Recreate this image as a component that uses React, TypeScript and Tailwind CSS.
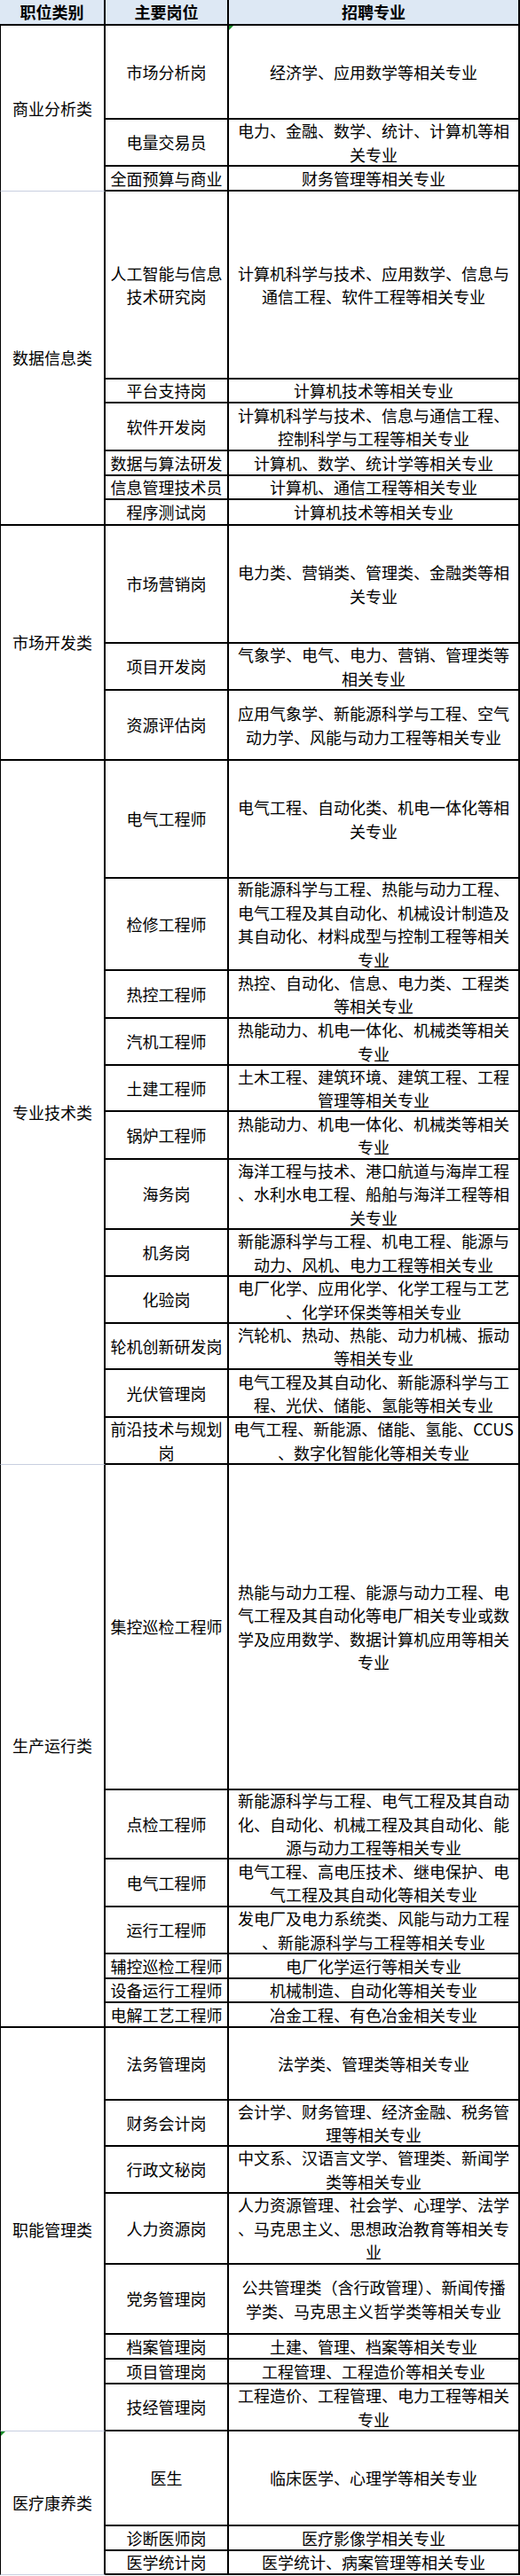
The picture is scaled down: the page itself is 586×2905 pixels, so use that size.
import React from "react";

type Row = { h: string; pos: string[]; maj: string[]; tri?: boolean };
type Group = { cat: string; gray: boolean; tri?: boolean; rows: Row[] };

const groups: Group[] = [
  {
    cat: "商业分析类",
    gray: true,
    rows: [
      { h: "h-[106px]", pos: ["市场分析岗"], maj: ["经济学、应用数学等相关专业"], tri: true },
      { h: "h-[53px]", pos: ["电量交易员"], maj: ["电力、金融、数学、统计、计算机等相", "关专业"] },
      { h: "h-[28px]", pos: ["全面预算与商业"], maj: ["财务管理等相关专业"] },
    ],
  },
  {
    cat: "数据信息类",
    gray: false,
    rows: [
      { h: "h-[212px]", pos: ["人工智能与信息", "技术研究岗"], maj: ["计算机科学与技术、应用数学、信息与", "通信工程、软件工程等相关专业"] },
      { h: "h-[27px]", pos: ["平台支持岗"], maj: ["计算机技术等相关专业"] },
      { h: "h-[54px]", pos: ["软件开发岗"], maj: ["计算机科学与技术、信息与通信工程、", "控制科学与工程等相关专业"] },
      { h: "h-[28px]", pos: ["数据与算法研发"], maj: ["计算机、数学、统计学等相关专业"] },
      { h: "h-[27px]", pos: ["信息管理技术员"], maj: ["计算机、通信工程等相关专业"] },
      { h: "h-[29px]", pos: ["程序测试岗"], maj: ["计算机技术等相关专业"] },
    ],
  },
  {
    cat: "市场开发类",
    gray: false,
    rows: [
      { h: "h-[133px]", pos: ["市场营销岗"], maj: ["电力类、营销类、管理类、金融类等相", "关专业"] },
      { h: "h-[53px]", pos: ["项目开发岗"], maj: ["气象学、电气、电力、营销、管理类等", "相关专业"] },
      { h: "h-[79px]", pos: ["资源评估岗"], maj: ["应用气象学、新能源科学与工程、空气", "动力学、风能与动力工程等相关专业"] },
    ],
  },
  {
    cat: "专业技术类",
    gray: true,
    rows: [
      { h: "h-[133px]", pos: ["电气工程师"], maj: ["电气工程、自动化类、机电一体化等相", "关专业"] },
      {
        h: "h-[104px]",
        pos: ["检修工程师"],
        maj: ["新能源科学与工程、热能与动力工程、", "电气工程及其自动化、机械设计制造及", "其自动化、材料成型与控制工程等相关", "专业"],
      },
      { h: "h-[54px]", pos: ["热控工程师"], maj: ["热控、自动化、信息、电力类、工程类", "等相关专业"] },
      { h: "h-[53px]", pos: ["汽机工程师"], maj: ["热能动力、机电一体化、机械类等相关", "专业"] },
      { h: "h-[52px]", pos: ["土建工程师"], maj: ["土木工程、建筑环境、建筑工程、工程", "管理等相关专业"] },
      { h: "h-[54px]", pos: ["锅炉工程师"], maj: ["热能动力、机电一体化、机械类等相关", "专业"] },
      { h: "h-[79px]", pos: ["海务岗"], maj: ["海洋工程与技术、港口航道与海岸工程", "、水利水电工程、船舶与海洋工程等相", "关专业"] },
      { h: "h-[53px]", pos: ["机务岗"], maj: ["新能源科学与工程、机电工程、能源与", "动力、风机、电力工程等相关专业"] },
      { h: "h-[53px]", pos: ["化验岗"], maj: ["电厂化学、应用化学、化学工程与工艺", "、化学环保类等相关专业"] },
      { h: "h-[52px]", pos: ["轮机创新研发岗"], maj: ["汽轮机、热动、热能、动力机械、振动", "等相关专业"] },
      { h: "h-[54px]", pos: ["光伏管理岗"], maj: ["电气工程及其自动化、新能源科学与工", "程、光伏、储能、氢能等相关专业"] },
      { h: "h-[53px]", pos: ["前沿技术与规划", "岗"], maj: ["电气工程、新能源、储能、氢能、CCUS", "、数字化智能化等相关专业"] },
    ],
  },
  {
    cat: "生产运行类",
    gray: false,
    rows: [
      {
        h: "h-[367px]",
        pos: ["集控巡检工程师"],
        maj: ["热能与动力工程、能源与动力工程、电", "气工程及其自动化等电厂相关专业或数", "学及应用数学、数据计算机应用等相关", "专业"],
      },
      { h: "h-[78px]", pos: ["点检工程师"], maj: ["新能源科学与工程、电气工程及其自动", "化、自动化、机械工程及其自动化、能", "源与动力工程等相关专业"] },
      { h: "h-[54px]", pos: ["电气工程师"], maj: ["电气工程、高电压技术、继电保护、电", "气工程及其自动化等相关专业"] },
      { h: "h-[53px]", pos: ["运行工程师"], maj: ["发电厂及电力系统类、风能与动力工程", "、新能源科学与工程等相关专业"] },
      { h: "h-[28px]", pos: ["辅控巡检工程师"], maj: ["电厂化学运行等相关专业"] },
      { h: "h-[27px]", pos: ["设备运行工程师"], maj: ["机械制造、自动化等相关专业"] },
      { h: "h-[28px]", pos: ["电解工艺工程师"], maj: ["冶金工程、有色冶金相关专业"] },
    ],
  },
  {
    cat: "职能管理类",
    gray: true,
    rows: [
      { h: "h-[82px]", pos: ["法务管理岗"], maj: ["法学类、管理类等相关专业"] },
      { h: "h-[52px]", pos: ["财务会计岗"], maj: ["会计学、财务管理、经济金融、税务管", "理等相关专业"] },
      { h: "h-[53px]", pos: ["行政文秘岗"], maj: ["中文系、汉语言文学、管理类、新闻学", "类等相关专业"] },
      { h: "h-[80px]", pos: ["人力资源岗"], maj: ["人力资源管理、社会学、心理学、法学", "、马克思主义、思想政治教育等相关专", "业"] },
      { h: "h-[79px]", pos: ["党务管理岗"], maj: ["公共管理类（含行政管理）、新闻传播", "学类、马克思主义哲学类等相关专业"] },
      { h: "h-[28px]", pos: ["档案管理岗"], maj: ["土建、管理、档案等相关专业"] },
      { h: "h-[28px]", pos: ["项目管理岗"], maj: ["工程管理、工程造价等相关专业"] },
      { h: "h-[53px]", pos: ["技经管理岗"], maj: ["工程造价、工程管理、电力工程等相关", "专业"] },
    ],
  },
  {
    cat: "医疗康养类",
    gray: true,
    tri: true,
    rows: [
      { h: "h-[107px]", pos: ["医生"], maj: ["临床医学、心理学等相关专业"] },
      { h: "h-[28px]", pos: ["诊断医师岗"], maj: ["医疗影像学相关专业"] },
      { h: "h-[27px]", pos: ["医学统计岗"], maj: ["医学统计、病案管理等相关专业"] },
    ],
  },
];

function Lines({ lines }: { lines: string[] }) {
  return (
    <div className="flex flex-col items-center">
      {lines.map((l, i) => (
        <div key={i} className="whitespace-nowrap">
          {l}
        </div>
      ))}
    </div>
  );
}

function Tri() {
  return (
    <svg className="absolute left-0 top-0" width="5" height="5" viewBox="0 0 5 5">
      <polygon points="0,0 5,0 0,5" fill="#1a8f2a" />
    </svg>
  );
}

export default function App() {
  return (
    <div className="w-[586px] bg-white text-black text-[18px] leading-[26.5px] font-['Noto_Sans_CJK_SC','Noto_Sans',sans-serif]">
      <div className="flex h-[29px] bg-[#dde8f4] border-b-2 border-black font-bold">
        <div className="w-[119px] shrink-0 border-r-2 border-black flex items-center justify-center">职位类别</div>
        <div className="w-[139px] shrink-0 border-r-2 border-black flex items-center justify-center">主要岗位</div>
        <div className="flex-1 border-r-2 border-black flex items-center justify-center">招聘专业</div>
      </div>
      {groups.map((g, gi) => (
        <div key={gi} className="flex">
          <div
            className={
              g.gray
                ? "relative w-[119px] shrink-0 border-l border-l-black border-r-2 border-r-black border-b border-b-[#c8cfe0] flex items-center justify-center"
                : "relative w-[119px] shrink-0 border-l border-l-black border-r-2 border-r-black border-b-2 border-b-black flex items-center justify-center"
            }
          >
            {g.tri && <Tri />}
            {g.cat}
          </div>
          <div className="flex-1 flex flex-col">
            {g.rows.map((r, ri) => (
              <div key={ri} className={`flex ${r.h} border-b-2 border-black`}>
                <div className="w-[139px] shrink-0 border-r-2 border-black flex items-center justify-center">
                  <Lines lines={r.pos} />
                </div>
                <div className="relative flex-1 border-r-2 border-black flex items-center justify-center">
                  {r.tri && <Tri />}
                  <Lines lines={r.maj} />
                </div>
              </div>
            ))}
          </div>
        </div>
      ))}
    </div>
  );
}
